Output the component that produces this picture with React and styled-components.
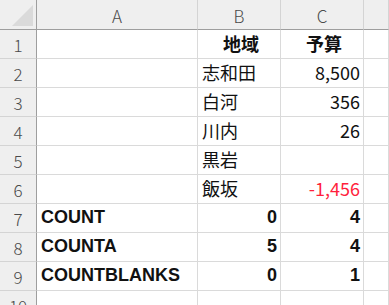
import React from 'react'
import styled, { createGlobalStyle } from 'styled-components'

const GlobalStyle = createGlobalStyle`
    html, body {
        margin: 0;
        padding: 0;
        background: #ffffff;
        overflow: hidden;
    }
`

const Sheet = styled.div`
    display: grid;
    grid-template-columns: 37px 161px 83px 83px 1fr;
    grid-template-rows: 30px repeat(10, 29px);
    width: 389px;
    height: 305px;
    overflow: hidden;
    font-family: "Noto Sans CJK JP", "Noto Sans", sans-serif;
`

/* grey header strip along the top */
const ColHead = styled.div`
    display: flex;
    align-items: center;
    justify-content: center;
    background: #efefef;
    border-right: 1px solid #d4d4d4;
    border-bottom: 1px solid #9e9e9e;
    color: #4a4a4a;
    font-size: 17px;
    font-weight: 300;
    box-sizing: border-box;
    padding-top: 1px;
`

const Corner = styled(ColHead)`
    justify-content: flex-end;
    align-items: flex-end;
    padding: 0 3px 3px 0;
    border-right: 1px solid #9e9e9e;
`

const Triangle = styled.div`
    width: 21px;
    height: 21px;
    background: #dadada;
    clip-path: polygon(100% 0, 100% 100%, 0 100%);
`

/* row numbers down the left side */
const RowHead = styled.div`
    display: flex;
    align-items: center;
    justify-content: center;
    background: #efefef;
    border-right: 1px solid #9e9e9e;
    border-bottom: 1px solid #d4d4d4;
    color: #4a4a4a;
    font-size: 17px;
    font-weight: 300;
    box-sizing: border-box;
`

const Cell = styled.div`
    display: flex;
    align-items: flex-end;
    justify-content: ${p => p.$align === 'right' ? 'flex-end' : p.$align === 'center' ? 'center' : 'flex-start'};
    border-right: 1px solid #dadada;
    border-bottom: 1px solid #dadada;
    box-sizing: border-box;
    padding: 0 ${p => p.$align === 'right' ? '3px' : '0'} 6px ${p => p.$align === 'right' ? '0' : '4px'};
    font-size: 18px;
    line-height: 1;
    white-space: nowrap;
    color: ${p => p.$red ? '#ff1f3d' : '#111111'};
    font-weight: ${p => p.$bold ? 700 : 400};
    font-family: ${p => p.$latin ? '"Liberation Sans", Arial, sans-serif' : '"Noto Sans CJK JP", "Noto Sans", sans-serif'};
`

const rows = [
    [{ t: '' }, { t: '地域', bold: true, align: 'center' }, { t: '予算', bold: true, align: 'center' }],
    [{ t: '' }, { t: '志和田' }, { t: '8,500', align: 'right' }],
    [{ t: '' }, { t: '白河' }, { t: '356', align: 'right' }],
    [{ t: '' }, { t: '川内' }, { t: '26', align: 'right' }],
    [{ t: '' }, { t: '黒岩' }, { t: '' }],
    [{ t: '' }, { t: '飯坂' }, { t: '-1,456', align: 'right', red: true }],
    [{ t: 'COUNT', bold: true, latin: true }, { t: '0', bold: true, latin: true, align: 'right' }, { t: '4', bold: true, latin: true, align: 'right' }],
    [{ t: 'COUNTA', bold: true, latin: true }, { t: '5', bold: true, latin: true, align: 'right' }, { t: '4', bold: true, latin: true, align: 'right' }],
    [{ t: 'COUNTBLANKS', bold: true, latin: true }, { t: '0', bold: true, latin: true, align: 'right' }, { t: '1', bold: true, latin: true, align: 'right' }],
    [{ t: '' }, { t: '' }, { t: '' }],
]

const App = () => {
    return (
        <>
            <GlobalStyle />
            <Sheet>
                <Corner><Triangle /></Corner>
                <ColHead>A</ColHead>
                <ColHead>B</ColHead>
                <ColHead>C</ColHead>
                <ColHead />
                {rows.map((row, i) => (
                    <React.Fragment key={i}>
                        <RowHead>{i + 1}</RowHead>
                        {row.map((c, j) => (
                            <Cell key={j} $align={c.align} $bold={c.bold} $red={c.red} $latin={c.latin}>{c.t}</Cell>
                        ))}
                        <Cell />
                    </React.Fragment>
                ))}
            </Sheet>
        </>
    )
}

export default App
